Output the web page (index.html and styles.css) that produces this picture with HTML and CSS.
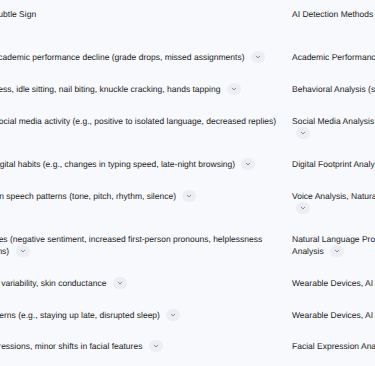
FILE: index.html
```html
<!DOCTYPE html>
<html>
  <head>
    <title>Subtle Signs</title>
    <link rel="stylesheet" href="styles.css">
  </head>
  <body>
    <div class="table-scroll">
      <table class="signs">
        <colgroup>
          <col class="col-sign">
          <col class="col-method">
        </colgroup>
        <thead>
          <tr>
            <th>Notable Subtle Sign</th>
            <th>AI Detection Methods</th>
          </tr>
        </thead>
        <tbody>
          <tr>
            <td>Gradual academic performance decline (grade drops, missed assignments) <button class="chip"><svg viewBox="0 0 8 8"><path d="M2.2 3.2 4 4.9 5.8 3.2"/></svg></button></td>
            <td>Academic Performance Tracking <button class="chip"><svg viewBox="0 0 8 8"><path d="M2.2 3.2 4 4.9 5.8 3.2"/></svg></button></td>
          </tr>
          <tr>
            <td>Restlessness, idle sitting, nail biting, knuckle cracking, hands tapping <button class="chip"><svg viewBox="0 0 8 8"><path d="M2.2 3.2 4 4.9 5.8 3.2"/></svg></button></td>
            <td>Behavioral Analysis (sensors, video) <button class="chip"><svg viewBox="0 0 8 8"><path d="M2.2 3.2 4 4.9 5.8 3.2"/></svg></button></td>
          </tr>
          <tr>
            <td>Unusual social media activity (e.g., positive to isolated language, decreased replies)</td>
            <td>Social Media Analysis (sentiment, engagement drop) <button class="chip"><svg viewBox="0 0 8 8"><path d="M2.2 3.2 4 4.9 5.8 3.2"/></svg></button></td>
          </tr>
          <tr>
            <td>Strange digital habits (e.g., changes in typing speed, late-night browsing) <button class="chip"><svg viewBox="0 0 8 8"><path d="M2.2 3.2 4 4.9 5.8 3.2"/></svg></button></td>
            <td>Digital Footprint Analysis <button class="chip"><svg viewBox="0 0 8 8"><path d="M2.2 3.2 4 4.9 5.8 3.2"/></svg></button></td>
          </tr>
          <tr>
            <td>Changes in speech patterns (tone, pitch, rhythm, silence) <button class="chip"><svg viewBox="0 0 8 8"><path d="M2.2 3.2 4 4.9 5.8 3.2"/></svg></button></td>
            <td>Voice Analysis, Natural Language Processing (NLP) <button class="chip"><svg viewBox="0 0 8 8"><path d="M2.2 3.2 4 4.9 5.8 3.2"/></svg></button></td>
          </tr>
          <tr>
            <td>Writing cues (negative sentiment, increased first-person pronouns, helplessness expressions) <button class="chip"><svg viewBox="0 0 8 8"><path d="M2.2 3.2 4 4.9 5.8 3.2"/></svg></button></td>
            <td>Natural Language Processing (NLP), Sentiment Analysis <button class="chip"><svg viewBox="0 0 8 8"><path d="M2.2 3.2 4 4.9 5.8 3.2"/></svg></button></td>
          </tr>
          <tr>
            <td>Heart rate variability, skin conductance <button class="chip"><svg viewBox="0 0 8 8"><path d="M2.2 3.2 4 4.9 5.8 3.2"/></svg></button></td>
            <td>Wearable Devices, AI Algorithms <button class="chip"><svg viewBox="0 0 8 8"><path d="M2.2 3.2 4 4.9 5.8 3.2"/></svg></button></td>
          </tr>
          <tr>
            <td>Sleep patterns (e.g., staying up late, disrupted sleep) <button class="chip"><svg viewBox="0 0 8 8"><path d="M2.2 3.2 4 4.9 5.8 3.2"/></svg></button></td>
            <td>Wearable Devices, AI Analysis <button class="chip"><svg viewBox="0 0 8 8"><path d="M2.2 3.2 4 4.9 5.8 3.2"/></svg></button></td>
          </tr>
          <tr>
            <td>Micro-expressions, minor shifts in facial features <button class="chip"><svg viewBox="0 0 8 8"><path d="M2.2 3.2 4 4.9 5.8 3.2"/></svg></button></td>
            <td>Facial Expression Analysis <button class="chip"><svg viewBox="0 0 8 8"><path d="M2.2 3.2 4 4.9 5.8 3.2"/></svg></button></td>
          </tr>
        </tbody>
      </table>
    </div>
  </body>
</html>
```

FILE: styles.css
```css
body,
table,
th,
td,
button {
  margin: 0;
  padding: 0;
  border: 0;
  box-sizing: border-box;
  font-family: "Liberation Sans", Arial, sans-serif;
}

/* Page */
body {
  background: #f8f9fc;
  color: #222;
  overflow: hidden;
  text-rendering: geometricPrecision;
}

/* Table wrapper, scrolled a little to the right */
.table-scroll {
  overflow: hidden;
  width: 375px;
}

.signs {
  table-layout: fixed;
  width: 552px;
  margin-left: -47px;
  border-collapse: collapse;
  font-size: 8.5px;
  line-height: 12px;
}

.col-sign {
  width: 331px;
}

.col-method {
  width: 221px;
}

th,
td {
  text-align: left;
  vertical-align: top;
  font-weight: normal;
}

th {
  padding: 8px 8px 21.6px;
}

td {
  padding: 9.8px 8px;
}

/* first column sits close to the second one */
th:first-child,
td:first-child {
  padding-right: 3px;
}

/* Little expand chip after each cell */
.chip {
  display: inline-flex;
  align-items: center;
  justify-content: center;
  width: 14px;
  height: 12px;
  margin-left: 4px;
  border-radius: 6px;
  background: #eceef3;
  vertical-align: top;
  cursor: pointer;
}

.chip svg {
  width: 8px;
  height: 8px;
  fill: none;
  stroke: #6b6f76;
  stroke-width: 0.8;
  stroke-linecap: round;
  stroke-linejoin: round;
}
```
